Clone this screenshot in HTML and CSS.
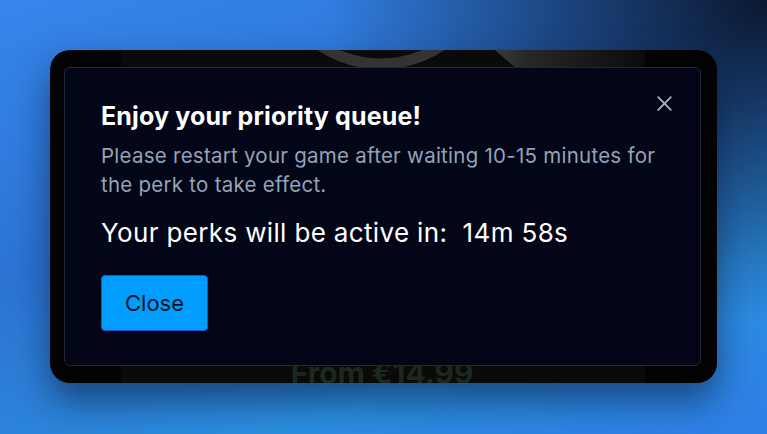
FILE: index.html
```html
<!DOCTYPE html>
<html lang="en">
<head>
<meta charset="utf-8">
<title>Priority queue</title>
<link rel="stylesheet" href="styles.css">
</head>
<body>
<div class="stage">
  <div class="card">
    <div class="product">
      <svg class="product-art" width="524" height="40" viewBox="0 0 524 40" aria-hidden="true">
        <defs>
          <linearGradient id="sheen" x1="0" y1="0" x2="1" y2="0">
            <stop offset="0" stop-color="#3a3a3a"/>
            <stop offset="0.2" stop-color="#282828"/>
            <stop offset="1" stop-color="#0b0b0b"/>
          </linearGradient>
        </defs>
        <polygon points="374,0 524,0 524,40 420,40" fill="url(#sheen)"/>
        <circle cx="260" cy="-94" r="108" fill="none" stroke="#333333" stroke-width="11"/>
      </svg>
      <div class="price">From €14.99</div>
    </div>

    <div class="modal" role="dialog">
      <button class="modal-x" aria-label="Close">
        <svg width="15" height="15" viewBox="0 0 15 15"><path d="M1.2 1.2L13.8 13.8M13.8 1.2L1.2 13.8" stroke="#aab0bc" stroke-width="1.8" stroke-linecap="round"/></svg>
      </button>
      <h2 class="modal-title">Enjoy your priority queue!</h2>
      <p class="modal-text">Please restart your game after waiting 10-15 minutes for the perk to take effect.</p>
      <p class="modal-timer">Your perks will be active in:&nbsp; 14m 58s</p>
      <button class="btn-close">Close</button>
    </div>
  </div>
</div>
</body>
</html>
```

FILE: styles.css
```css
* { box-sizing: border-box; }

html, body {
  margin: 0;
  height: 100%;
}

body {
  font-family: Inter, "Noto Sans", "Liberation Sans", sans-serif;
  background:
    radial-gradient(ellipse 440px 320px at 100% 0%, #0b1830 0%, rgba(11,24,48,0.6) 40%, rgba(11,24,48,0) 100%),
    linear-gradient(160deg, #3686ec 0%, #2c73d2 40%, #2c8fe0 75%, #2f7fe8 100%);
  overflow: hidden;
}

.stage {
  padding: 50px 0 0 50px;
}

.card {
  position: relative;
  width: 667px;
  height: 333px;
  border-radius: 20px;
  background: #030303;
  overflow: hidden;
  box-shadow: 0 18px 36px rgba(6, 20, 50, 0.55);
}

.product {
  margin-left: 71px;
  width: 524px;
  height: 100%;
  background: #0a0a0a;
  display: flex;
  flex-direction: column;
  justify-content: space-between;
}

.product-art {
  display: block;
}

.price {
  text-align: center;
  font-size: 30px;
  font-weight: 700;
  line-height: 36px;
  color: #1c281d;
  margin-bottom: -8px;
  padding-right: 2px;
}

.modal {
  position: absolute;
  left: 14px;
  top: 17px;
  width: 637px;
  height: 299px;
  background: #020617;
  border: 1px solid #1e293b;
  border-radius: 6px;
  padding: 32px 36px;
}

.modal-x {
  position: absolute;
  top: 28px;
  right: 28px;
  width: 15px;
  height: 15px;
  padding: 0;
  border: 0;
  background: none;
  display: flex;
}

.modal-title {
  margin: 0;
  font-size: 25px;
  line-height: 32px;
  font-weight: 700;
  color: #ffffff;
  letter-spacing: 0.15px;
}

.modal-text {
  margin: 9px 0 0;
  font-size: 20.5px;
  line-height: 29px;
  letter-spacing: 0.25px;
  color: #94a3b8;
  max-width: 565px;
}

.modal-timer {
  margin: 18px 0 0;
  font-size: 26px;
  line-height: 32px;
  letter-spacing: 0.35px;
  color: #ffffff;
}

.btn-close {
  margin-top: 26px;
  display: block;
  width: 107px;
  height: 56px;
  background: #009dff;
  border: 1px solid #2a4fd0;
  border-radius: 4px;
  font-family: inherit;
  font-size: 22px;
  color: #0b1220;
  padding: 0;
}
```
